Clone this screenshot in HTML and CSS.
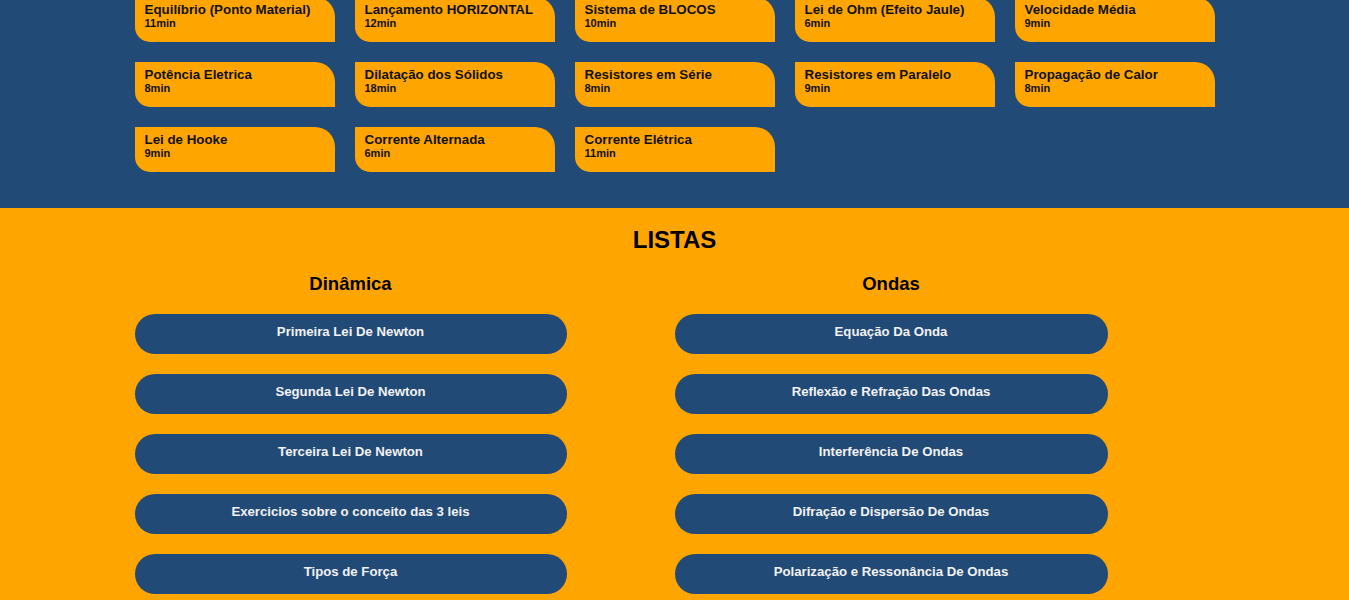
FILE: index.html
```html
<!DOCTYPE html>
<html lang="pt-BR">
<head>
<meta charset="utf-8">
<title>Física</title>
<link rel="stylesheet" href="styles.css">
</head>
<body>
<section class="aulas">
  <div class="grid">
    <a class="card"><span class="t">Equilíbrio (Ponto Material)</span><span class="m">11min</span></a>
    <a class="card"><span class="t">Lançamento HORIZONTAL</span><span class="m">12min</span></a>
    <a class="card"><span class="t">Sistema de BLOCOS</span><span class="m">10min</span></a>
    <a class="card"><span class="t">Lei de Ohm (Efeito Jaule)</span><span class="m">6min</span></a>
    <a class="card"><span class="t">Velocidade Média</span><span class="m">9min</span></a>
    <a class="card"><span class="t">Potência Eletrica</span><span class="m">8min</span></a>
    <a class="card"><span class="t">Dilatação dos Sólidos</span><span class="m">18min</span></a>
    <a class="card"><span class="t">Resistores em Série</span><span class="m">8min</span></a>
    <a class="card"><span class="t">Resistores em Paralelo</span><span class="m">9min</span></a>
    <a class="card"><span class="t">Propagação de Calor</span><span class="m">8min</span></a>
    <a class="card"><span class="t">Lei de Hooke</span><span class="m">9min</span></a>
    <a class="card"><span class="t">Corrente Alternada</span><span class="m">6min</span></a>
    <a class="card"><span class="t">Corrente Elétrica</span><span class="m">11min</span></a>
  </div>
</section>
<section class="listas">
  <h2 class="titulo">LISTAS</h2>
  <div class="cols">
    <div class="col">
      <h3 class="sub">Dinâmica</h3>
      <a class="btn">Primeira Lei De Newton</a>
      <a class="btn">Segunda Lei De Newton</a>
      <a class="btn">Terceira Lei De Newton</a>
      <a class="btn">Exercicios sobre o conceito das 3 leis</a>
      <a class="btn">Tipos de Força</a>
    </div>
    <div class="col">
      <h3 class="sub">Ondas</h3>
      <a class="btn">Equação Da Onda</a>
      <a class="btn">Reflexão e Refração Das Ondas</a>
      <a class="btn">Interferência De Ondas</a>
      <a class="btn">Difração e Dispersão De Ondas</a>
      <a class="btn">Polarização e Ressonância De Ondas</a>
    </div>
  </div>
</section>
</body>
</html>
```
FILE: styles.css
```css
* { box-sizing: border-box; }
html, body { margin: 0; padding: 0; }
body {
  font-family: "Liberation Sans", Arial, sans-serif;
  background: #ffa500;
  overflow: hidden;
}
.aulas {
  background: #224a76;
  padding: 0 0 36px;
}
.grid {
  width: 1080px;
  margin: -3px auto 0;
  display: grid;
  grid-template-columns: repeat(5, 200px);
  gap: 20px;
}
.card {
  display: flex;
  flex-direction: column;
  height: 45px;
  padding: 5px 10px 0;
  background: #ffa500;
  color: #111;
  border-radius: 0 20px 0 15px;
  font-weight: bold;
}
.card .t { font-size: 13.33px; line-height: 15px; }
.card .m { font-size: 11px; line-height: 13px; }
.listas {
  padding-top: 18px;
}
.titulo {
  margin: 0;
  text-align: center;
  font-size: 24px;
  line-height: 28px;
  color: #000;
}
.cols {
  width: 1080px;
  margin: 0 auto;
  display: grid;
  grid-template-columns: 540px 540px;
}
.col {
  width: 433px;
  display: flex;
  flex-direction: column;
  gap: 20px;
}
.col:first-child { width: 432px; }
.sub {
  margin: 19px 0 0;
  text-align: center;
  font-size: 18.5px;
  line-height: 21px;
  color: #000;
}
.btn {
  display: block;
  height: 40px;
  padding-top: 10px;
  border-radius: 20px;
  background: #224a76;
  color: #f2f2f2;
  text-align: center;
  font-size: 13.2px;
  line-height: 15px;
  font-weight: bold;
}
```
